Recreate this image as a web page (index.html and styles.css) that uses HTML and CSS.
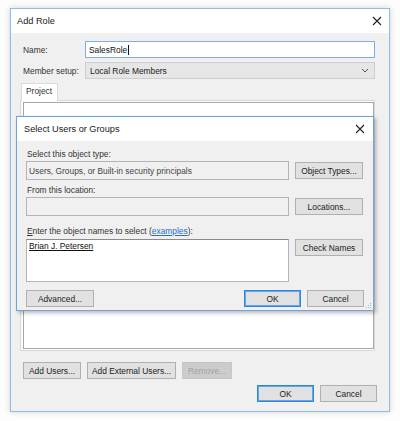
FILE: index.html
```html
<!DOCTYPE html>
<html>
<head>
<meta charset="utf-8">
<link rel="stylesheet" href="styles.css">
</head>
<body>
<div class="win">
  <div class="titlebar">
    <span class="title">Add Role</span>
    <svg class="close" width="10" height="10" viewBox="0 0 10 10"><path d="M1 1L9 9M9 1L1 9" stroke="#222" stroke-width="1.1" fill="none"/></svg>
  </div>
  <div class="wbody">
    <div class="row">
      <span class="lbl">Name:</span>
      <div class="input focus">SalesRole<span class="caret"></span></div>
    </div>
    <div class="row r2">
      <span class="lbl">Member setup:</span>
      <div class="select">Local Role Members
        <svg class="chev" width="8" height="5" viewBox="0 0 8 5"><path d="M1 1L4 4L7 1" stroke="#555" stroke-width="1" fill="none"/></svg>
      </div>
    </div>
    <div class="tabs"><span class="tab">Project</span></div>
    <div class="tabpanel">
      <div class="listbox"></div>
    </div>
    <div class="btnrow">
      <button class="btn w58">Add Users...</button>
      <button class="btn w89">Add External Users...</button>
      <button class="btn w50 dis">Remove...</button>
    </div>
    <div class="okrow">
      <button class="btn w57 def">OK</button>
      <button class="btn w57">Cancel</button>
    </div>
  </div>
</div>

<div class="dlg">
  <div class="titlebar t2">
    <span class="title">Select Users or Groups</span>
    <svg class="close" width="10" height="10" viewBox="0 0 10 10"><path d="M1 1L9 9M9 1L1 9" stroke="#222" stroke-width="1.1" fill="none"/></svg>
  </div>
  <div class="dbody">
    <div class="dl">Select this object type:</div>
    <div class="drow">
      <div class="field">Users, Groups, or Built-in security principals</div>
      <button class="btn w68">Object Types...</button>
    </div>
    <div class="dl l2">From this location:</div>
    <div class="drow">
      <div class="field"></div>
      <button class="btn w68">Locations...</button>
    </div>
    <div class="dl l3"><u>E</u>nter the object names to select (<a class="link">examples</a>):</div>
    <div class="drow top">
      <div class="area"><span class="name">Brian J. Petersen</span></div>
      <button class="btn w68">Check Names</button>
    </div>
    <div class="drow foot">
      <button class="btn w68">Advanced...</button>
      <span class="spacer"></span>
      <button class="btn w57 def">OK</button>
      <button class="btn w57">Cancel</button>
    </div>
    <svg class="grip" width="7" height="7" viewBox="0 0 7 7"><g fill="#b5b5b5"><rect x="5" y="1" width="1" height="1"/><rect x="3" y="3" width="1" height="1"/><rect x="5" y="3" width="1" height="1"/><rect x="1" y="5" width="1" height="1"/><rect x="3" y="5" width="1" height="1"/><rect x="5" y="5" width="1" height="1"/></g></svg>
  </div>
</div>
</body>
</html>
```

FILE: styles.css
```css
* { box-sizing: border-box; }
html, body { margin: 0; padding: 0; }
body {
  position: relative;
  width: 400px;
  height: 421px;
  background: #fdfdfd;
  font-family: "Liberation Sans", Arial, sans-serif;
  font-size: 8.4px;
  color: #1e1e1e;
  overflow: hidden;
}
.win {
  margin: 8px 0 0 10px;
  width: 380px;
  height: 404px;
  border: 1px solid #8fbbe6;
  background: #f0f0f0;
  box-shadow: 0 0 6px rgba(0,0,0,0.18);
  display: flex;
  flex-direction: column;
}
.titlebar {
  height: 24px;
  background: #fff;
  display: flex;
  align-items: center;
  padding: 0 7px 0 6px;
  flex: none;
}
.title { font-size: 9.2px; color: #1a1a1a; flex: 1; }
.close { display: block; }
.wbody {
  padding: 8px 14px 0 9px;
  display: flex;
  flex-direction: column;
}
.row { display: flex; align-items: center; height: 17px; }
.r2 { margin-top: 4px; }
.lbl { width: 65px; padding-left: 3px; color: #333; flex: none; }
.input {
  flex: 1;
  height: 17px;
  background: #fff;
  border: 1px solid #79b1e3;
  padding: 0 3px;
  display: flex;
  align-items: center;
  color: #111;
}
.caret { width: 1px; height: 10px; background: #111; margin-left: 1px; }
.select {
  flex: 1;
  height: 17px;
  background: #e6e6e6;
  border: 1px solid #cfcfcf;
  padding: 0 4px;
  display: flex;
  align-items: center;
  justify-content: space-between;
  color: #222;
}
.chev { margin-right: 1px; }
.tabs { margin-top: 4px; height: 18px; display: flex; padding-left: 1px; position: relative; z-index: 1; }
.tab {
  width: 37px;
  height: 18px;
  background: #fff;
  border: 1px solid #dadada;
  border-bottom: none;
  padding: 2px 0 0 4px;
  color: #333;
}
.tabpanel {
  margin-top: -1px;
  height: 251px;
  background: #fbfbfb;
  border: 1px solid #d9d9d9;
  padding: 1px 0 1px 2px;
  margin-right: 0;
}
.listbox {
  height: 247px;
  background: #fff;
  border: 1px solid #a8a8a8;
}
.btnrow { display: flex; gap: 6px; margin-top: 11px; padding-left: 3px; }
.okrow { display: flex; gap: 6px; margin-top: 6px; justify-content: flex-end; margin-right: -2px; }
.btn {
  height: 17px;
  background: #e1e1e1;
  border: 1px solid #b0b0b0;
  font-family: inherit;
  font-size: 8.4px;
  color: #222;
  padding: 0;
  margin: 0;
  display: flex;
  align-items: center;
  justify-content: center;
}
.w50 { width: 50px; }
.w57 { width: 57px; }
.w58 { width: 58px; }
.w68 { width: 68px; }
.w89 { width: 89px; }
.dis { background: #cccccc; border-color: #c6c6c6; color: #a3a3a3; }
.def { border: 1px solid #2f86d6; box-shadow: inset 0 0 0 1px #64a6e4; }

.dlg {
  position: absolute;
  left: 16px;
  top: 116px;
  width: 358px;
  height: 195px;
  border: 1px solid #6ea6dc;
  background: #f0f0f0;
  box-shadow: 2px 2px 4px rgba(0,0,0,0.28);
  display: flex;
  flex-direction: column;
}
.t2 { height: 24px; padding: 0 8px 0 7px; }
.dbody {
  position: relative;
  flex: 1;
  padding: 7px 9px 0 9px;
  display: flex;
  flex-direction: column;
}
.dl { height: 12px; line-height: 12px; color: #333; padding-left: 1px; }
.l2 { margin-top: 4px; }
.l3 { margin-top: 9px; }
.drow { display: flex; gap: 6px; align-items: center; margin-top: 1px; }
.drow.top { align-items: flex-start; margin-top: 2px; }
.field {
  width: 263px;
  height: 19px;
  border: 1px solid #b4b4b4;
  background: #f0f0f0;
  padding: 0 2px;
  display: flex;
  align-items: center;
  color: #444;
}
.area {
  width: 263px;
  height: 43px;
  background: #fff;
  border: 1px solid #b4b4b4;
  border-top-color: #8a8a8a;
  padding: 1px 2px;
}
.name { text-decoration: underline; color: #111; }
.link { color: #2a6fc9; text-decoration: underline; }
.foot { margin-top: 8px; gap: 6px; }
.spacer { flex: 1; }
.grip { position: absolute; right: 1px; bottom: 1px; }
```
